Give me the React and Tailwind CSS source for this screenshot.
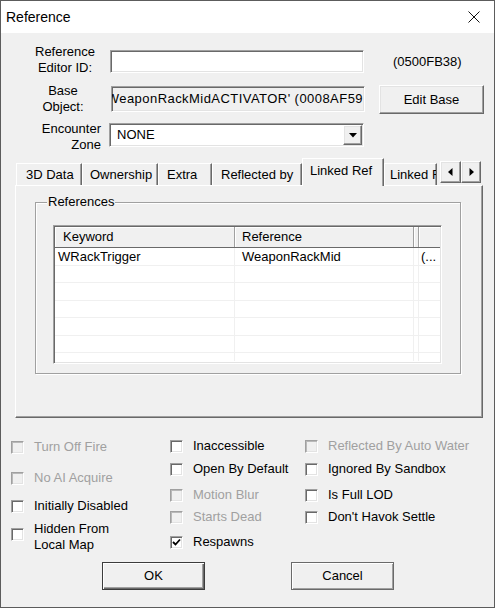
import React from "react";

const sunken =
  "border border-t-[#a0a0a0] border-l-[#a0a0a0] border-r-white border-b-white shadow-[inset_1px_1px_0_#696969,inset_-1px_-1px_0_#e3e3e3]";
const raised =
  "border border-t-white border-l-white border-r-[#696969] border-b-[#696969] shadow-[inset_-1px_-1px_0_#a0a0a0,inset_1px_1px_0_#e3e3e3]";

function Check({ label, checked = false, disabled = false, className = "", twoLine = false }) {
  return (
    <div className={`flex ${twoLine ? "items-start" : "items-center h-[16px]"} ${className}`}>
      <div
        className={`w-[13px] h-[13px] shrink-0 flex items-center justify-center border border-t-[#a0a0a0] border-l-[#a0a0a0] border-r-white border-b-white ${
          disabled
            ? "bg-[#f0f0f0] shadow-[inset_1px_1px_0_#b9b9b9,inset_-1px_-1px_0_#e3e3e3]"
            : "bg-white shadow-[inset_1px_1px_0_#696969,inset_-1px_-1px_0_#e3e3e3]"
        } ${twoLine ? "mt-[7px]" : ""}`}
      >
        {checked && (
          <svg width="9" height="9" viewBox="0 0 9 9">
            <path d="M1 4 L3.5 6.5 L8 1.5" stroke="#000" strokeWidth="1.8" fill="none" />
          </svg>
        )}
      </div>
      <div className={`ml-[10px] leading-[16px] whitespace-nowrap ${disabled ? "text-[#a0a0a0]" : "text-black"}`}>
        {label}
      </div>
    </div>
  );
}

function Tab({ label, w, pl, selected = false, className = "" }) {
  return (
    <div
      className={`${w} ${pl} shrink-0 overflow-hidden whitespace-nowrap bg-[#f0f0f0] border-t border-l border-t-white border-l-white border-r border-r-[#696969] shadow-[inset_-1px_0_0_#a0a0a0] flex items-center ${
        selected ? "h-[28px] -mb-px relative z-10 pb-[4px]" : "h-[22px]"
      } ${className}`}
    >
      {label}
    </div>
  );
}

const rows = [
  ["WRackTrigger", "WeaponRackMid", "(..."],
  ["", "", ""],
  ["", "", ""],
  ["", "", ""],
  ["", "", ""],
  ["", "", ""],
];
const rowH = ["h-[18px]", "h-[17px]", "h-[18px]", "h-[17px]", "h-[18px]", "h-[17px]"];

export default function App() {
  return (
    <div className="w-[495px] h-[608px] border border-[#5c5c5c] bg-[#f0f0f0] overflow-hidden flex flex-col font-['Liberation_Sans',Arial,sans-serif] text-[13px] text-black">
      {/* title bar */}
      <div className="h-[32px] shrink-0 bg-white flex items-center justify-between pl-[5px] pr-[14px]">
        <span className="text-[14px]">Reference</span>
        <svg width="12" height="12" viewBox="0 0 12 12">
          <path d="M0.5 0.5 L11.5 11.5 M11.5 0.5 L0.5 11.5" stroke="#111" strokeWidth="1" />
        </svg>
      </div>

      {/* Reference Editor ID */}
      <div className="mt-[11px] h-[32px] flex items-start">
        <div className="ml-[29px] w-[70px] text-center leading-[16px]">
          Reference
          <br />
          Editor ID:
        </div>
        <div className={`ml-[10px] mt-[6px] w-[254px] h-[23px] bg-white ${sunken}`}></div>
        <div className="ml-[29px] mt-[10px] leading-[16px]">(0500FB38)</div>
      </div>

      {/* Base Object */}
      <div className="mt-[7px] h-[31px] flex items-start">
        <div className="ml-[27px] w-[70px] text-center leading-[16px]">
          Base
          <br />
          Object:
        </div>
        <div
          className={`ml-[13px] mt-[3px] w-[254px] h-[26px] bg-[#f0f0f0] ${sunken} flex items-center justify-end overflow-hidden whitespace-nowrap pr-[1px]`}
        >
          <span className="tracking-[0.45px] shrink-0">WeaponRackMidACTIVATOR' (0008AF59</span>
        </div>
        <div className={`ml-[14px] mt-[2px] w-[105px] h-[29px] ${raised} flex items-center justify-center`}>
          Edit Base
        </div>
      </div>

      {/* Encounter Zone */}
      <div className="mt-[7px] h-[32px] flex items-start">
        <div className="ml-[29px] w-[71px] text-right leading-[16px]">
          Encounter
          <br />
          Zone
        </div>
        <div className={`ml-[8px] mt-[2px] w-[255px] h-[24px] bg-white ${sunken} flex items-center p-[1px]`}>
          <span className="flex-1 pl-[6px]">NONE</span>
          <div className={`w-[19px] h-[20px] bg-[#f0f0f0] ${raised} flex items-center justify-center`}>
            <svg width="8" height="5" viewBox="0 0 8 5">
              <path d="M0 0 H8 L4 4.5 Z" fill="#000" />
            </svg>
          </div>
        </div>
      </div>

      {/* tab strip */}
      <div className="mt-[5px] ml-[15px] h-[27px] flex items-end">
        <Tab label="3D Data" w="w-[66px]" pl="pl-[9px]" />
        <Tab label="Ownership" w="w-[76px]" pl="pl-[7px]" />
        <Tab label="Extra" w="w-[54px]" pl="pl-[8px]" />
        <Tab label="Reflected by" w="w-[90px]" pl="pl-[8px]" />
        <Tab label="Linked Ref" w="w-[82px]" pl="pl-[7px]" selected />
        <Tab label="Linked Ref" w="w-[53px]" pl="pl-[5px]" />
        <div className={`ml-[3px] mb-[2px] w-[21px] h-[22px] bg-[#f0f0f0] ${raised} flex items-center justify-center`}>
          <svg width="5" height="8" viewBox="0 0 5 8">
            <path d="M4.5 0 V8 L0 4 Z" fill="#000" />
          </svg>
        </div>
        <div className={`mb-[2px] w-[20px] h-[22px] bg-[#f0f0f0] ${raised} flex items-center justify-center`}>
          <svg width="5" height="8" viewBox="0 0 5 8">
            <path d="M0.5 0 V8 L5 4 Z" fill="#000" />
          </svg>
        </div>
      </div>

      {/* tab panel */}
      <div className="ml-[14px] w-[468px] h-[233px] border border-t-white border-l-white border-r-[#696969] border-b-[#696969] shadow-[inset_-1px_-1px_0_#a0a0a0] flex flex-col">
        <div className="relative mt-[16px] ml-[19px] w-[426px] h-[172px] border border-[#a0a0a0] shadow-[inset_1px_1px_0_white,1px_1px_0_white]">
          <div className="absolute left-[11px] -top-[9px] px-[1px] bg-[#f0f0f0] leading-[16px]">References</div>

          {/* list view */}
          <div className={`mt-[22px] ml-[17px] w-[389px] h-[139px] bg-white ${sunken} p-[1px] overflow-hidden`}>
            <div className="h-[21px] flex bg-[#f0f0f0] border-b border-b-[#696969]">
              <div className="w-[180px] shrink-0 pl-[8px] flex items-center border-r border-r-[#a0a0a0] shadow-[inset_1px_1px_0_white]">
                Keyword
              </div>
              <div className="w-[179px] shrink-0 pl-[7px] flex items-center border-r border-r-[#a0a0a0] shadow-[inset_1px_1px_0_white]">
                Reference
              </div>
              <div className="w-[5px] shrink-0 border-r border-r-[#a0a0a0] shadow-[inset_1px_1px_0_white]"></div>
              <div className="flex-1 shadow-[inset_1px_1px_0_white]"></div>
            </div>
            {rows.map((r, i) => (
              <div key={i} className={`${rowH[i]} flex border-b border-b-[#f0f0f0]`}>
                <div className="w-[180px] shrink-0 pl-[3px] flex items-center border-r border-r-[#f0f0f0] whitespace-nowrap">
                  {r[0]}
                </div>
                <div className="w-[179px] shrink-0 pl-[7px] flex items-center border-r border-r-[#f0f0f0] whitespace-nowrap">
                  {r[1]}
                </div>
                <div className="w-[5px] shrink-0 border-r border-r-[#f0f0f0]"></div>
                <div className="flex-1 pl-[2px] flex items-center whitespace-nowrap overflow-hidden">{r[2]}</div>
              </div>
            ))}
            <div className="h-[8px] flex">
              <div className="w-[180px] shrink-0 border-r border-r-[#f0f0f0]"></div>
              <div className="w-[179px] shrink-0 border-r border-r-[#f0f0f0]"></div>
              <div className="w-[5px] shrink-0 border-r border-r-[#f0f0f0]"></div>
            </div>
          </div>
        </div>
      </div>

      {/* check boxes */}
      <div className="mt-[20px] h-[116px] flex pl-[10px]">
        <div className="w-[159px] shrink-0 flex flex-col">
          <Check label="Turn Off Fire" disabled className="mt-[1px]" />
          <Check label="No AI Acquire" disabled className="mt-[15px]" />
          <Check label="Initially Disabled" className="mt-[12px]" />
          <Check
            twoLine
            className="mt-[7px]"
            label={
              <>
                Hidden From
                <br />
                Local Map
              </>
            }
          />
        </div>
        <div className="w-[135px] shrink-0 flex flex-col">
          <Check label="Inaccessible" />
          <Check label="Open By Default" className="mt-[7px]" />
          <Check label="Motion Blur" disabled className="mt-[10px]" />
          <Check label="Starts Dead" disabled className="mt-[6px]" />
          <Check label="Respawns" checked className="mt-[9px]" />
        </div>
        <div className="flex-1 flex flex-col">
          <Check label="Reflected By Auto Water" disabled />
          <Check label="Ignored By Sandbox" className="mt-[7px]" />
          <Check label="Is Full LOD" className="mt-[10px]" />
          <Check label="Don't Havok Settle" className="mt-[6px]" />
        </div>
      </div>

      {/* buttons */}
      <div className="mt-[8px] flex">
        <div className="ml-[101px] w-[103px] h-[28px] border border-[#3c3c3c] shadow-[inset_1px_1px_0_white,inset_-1px_-1px_0_#696969,inset_-2px_-2px_0_#a0a0a0] flex items-center justify-center">
          OK
        </div>
        <div className="ml-[86px] w-[103px] h-[28px] border border-[#6a6a6a] shadow-[inset_1px_1px_0_white,inset_-1px_-1px_0_#a0a0a0] flex items-center justify-center">
          Cancel
        </div>
      </div>
    </div>
  );
}
